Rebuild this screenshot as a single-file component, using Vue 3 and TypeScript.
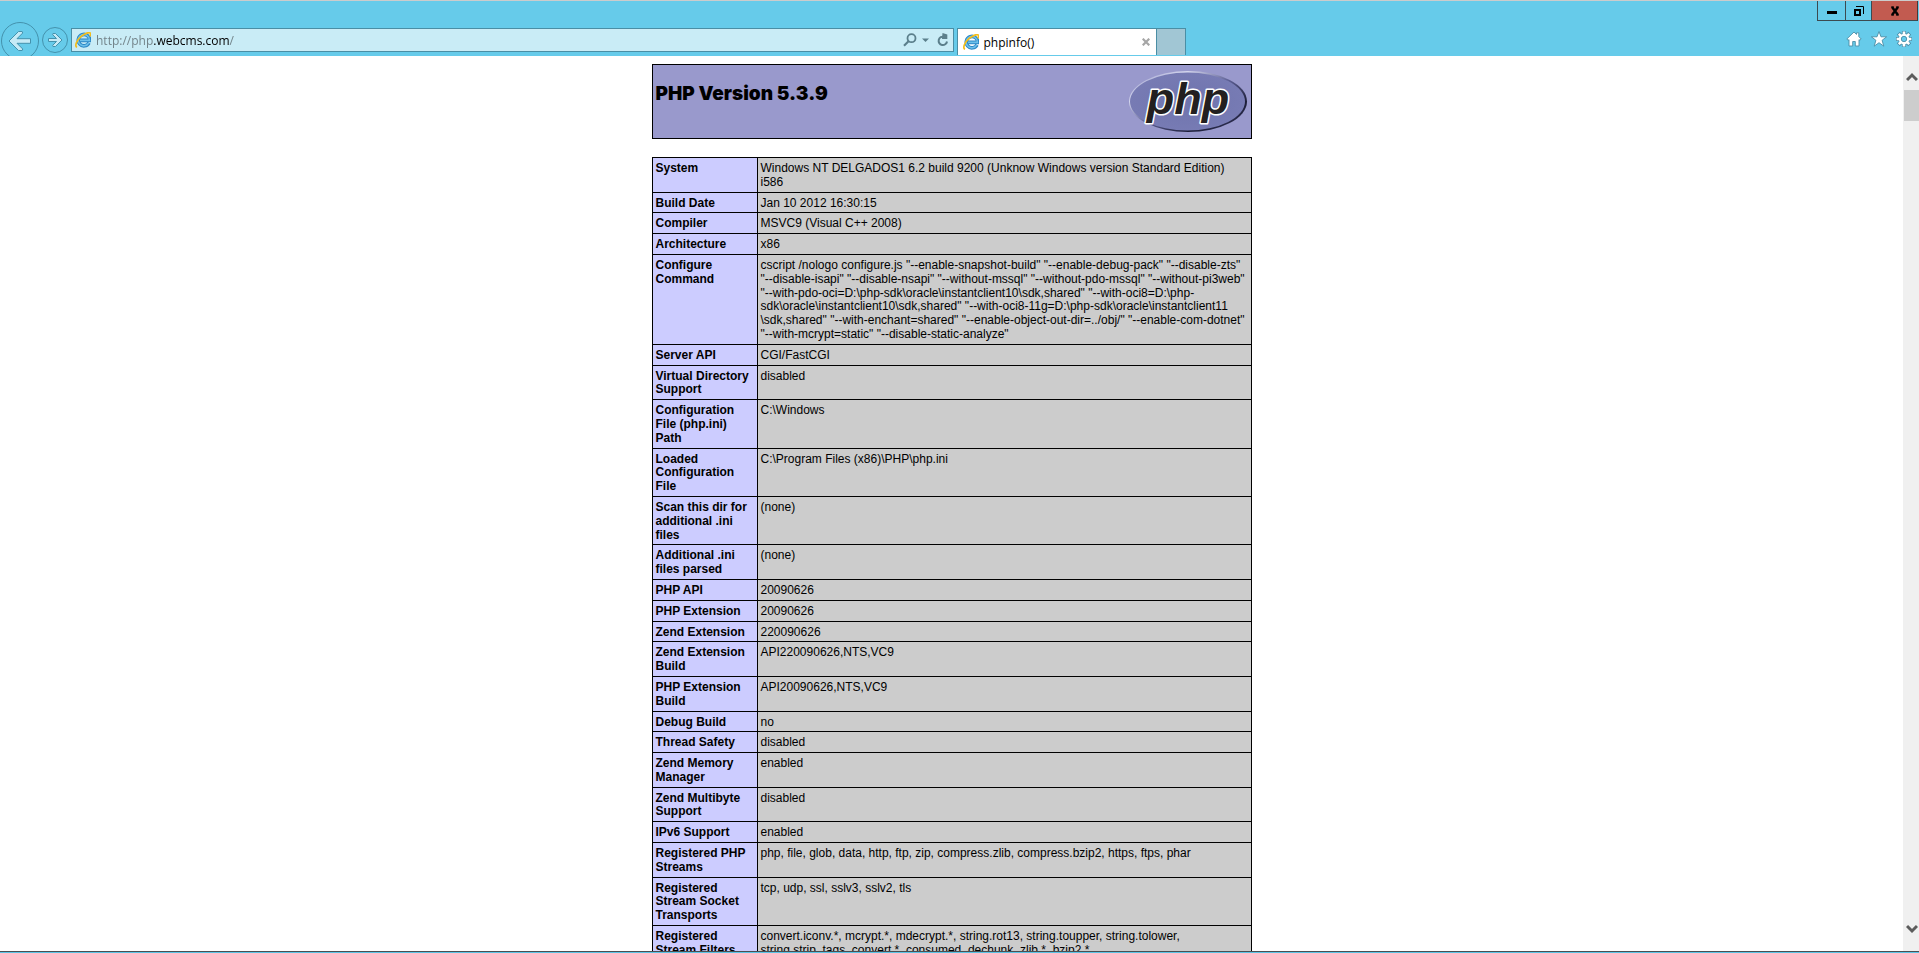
<script setup lang="ts">
import { ref } from 'vue'

interface InfoRow {
  name: string
  value: string
}

const address = ref<string>('http://php.webcms.com/')

const rows: InfoRow[] = [
  { name: 'System', value: 'Windows NT DELGADOS1 6.2 build 9200 (Unknow Windows version Standard Edition)\ni586' },
  { name: 'Build Date', value: 'Jan 10 2012 16:30:15' },
  { name: 'Compiler', value: 'MSVC9 (Visual C++ 2008)' },
  { name: 'Architecture', value: 'x86' },
  {
    name: 'Configure\nCommand',
    value: [
      'cscript /nologo configure.js "--enable-snapshot-build" "--enable-debug-pack" "--disable-zts"',
      '"--disable-isapi" "--disable-nsapi" "--without-mssql" "--without-pdo-mssql" "--without-pi3web"',
      '"--with-pdo-oci=D:\\php-sdk\\oracle\\instantclient10\\sdk,shared" "--with-oci8=D:\\php-',
      'sdk\\oracle\\instantclient10\\sdk,shared" "--with-oci8-11g=D:\\php-sdk\\oracle\\instantclient11',
      '\\sdk,shared" "--with-enchant=shared" "--enable-object-out-dir=../obj/" "--enable-com-dotnet"',
      '"--with-mcrypt=static" "--disable-static-analyze"',
    ].join('\n'),
  },
  { name: 'Server API', value: 'CGI/FastCGI' },
  { name: 'Virtual Directory\nSupport', value: 'disabled' },
  { name: 'Configuration\nFile (php.ini)\nPath', value: 'C:\\Windows' },
  { name: 'Loaded\nConfiguration\nFile', value: 'C:\\Program Files (x86)\\PHP\\php.ini' },
  { name: 'Scan this dir for\nadditional .ini\nfiles', value: '(none)' },
  { name: 'Additional .ini\nfiles parsed', value: '(none)' },
  { name: 'PHP API', value: '20090626' },
  { name: 'PHP Extension', value: '20090626' },
  { name: 'Zend Extension', value: '220090626' },
  { name: 'Zend Extension\nBuild', value: 'API220090626,NTS,VC9' },
  { name: 'PHP Extension\nBuild', value: 'API20090626,NTS,VC9' },
  { name: 'Debug Build', value: 'no' },
  { name: 'Thread Safety', value: 'disabled' },
  { name: 'Zend Memory\nManager', value: 'enabled' },
  { name: 'Zend Multibyte\nSupport', value: 'disabled' },
  { name: 'IPv6 Support', value: 'enabled' },
  { name: 'Registered PHP\nStreams', value: 'php, file, glob, data, http, ftp, zip, compress.zlib, compress.bzip2, https, ftps, phar' },
  { name: 'Registered\nStream Socket\nTransports', value: 'tcp, udp, ssl, sslv3, sslv2, tls' },
  {
    name: 'Registered\nStream Filters',
    value: 'convert.iconv.*, mcrypt.*, mdecrypt.*, string.rot13, string.toupper, string.tolower,\nstring.strip_tags, convert.*, consumed, dechunk, zlib.*, bzip2.*',
  },
]
</script>

<template>
  <div class="window">
    <svg class="defs" aria-hidden="true">
      <symbol id="ie" viewBox="0 0 16 16">
        <path d="M14 10.900a5.700 5.700 0 1 1 .7-2.500H5" fill="none" stroke="#2b86c5" stroke-width="3.600" />
        <path d="M13.800 10.900a5.700 5.700 0 1 1 .7-2.500H5" fill="none" stroke="#6cc0ea" stroke-width="1.600" />
        <path d="M2 15.200C-.6 14 1.600 8.300 6.200 4.400 10 1.200 14.500-.2 15.300 1.200c.5.800.2 2-.5 3.200" fill="none" stroke="#f3bd1b" stroke-width="1.700" />
      </symbol>
    </svg>

    <header class="chrome">
      <div class="caption">
        <button type="button" class="cap min" aria-label="Minimize">
          <svg width="10" height="10" viewBox="0 0 10 10"><path d="M0 5h10v3H0z" /></svg>
        </button>
        <button type="button" class="cap restore" aria-label="Restore">
          <svg width="10" height="10" viewBox="0 0 10 10">
            <path d="M1 4h5v5H1z" fill="none" stroke="#000" stroke-width="2" />
            <path d="M2 .5h7.500V8" fill="none" stroke="#000" />
          </svg>
        </button>
        <button type="button" class="cap close" aria-label="Close">
          <svg width="10" height="10" viewBox="0 0 10 10">
            <path d="M2 1l6 8M8 1L2 9" fill="none" stroke="#000" stroke-width="2.400" />
            <path d="M1 1h3M6 1h3M1 9h3M6 9h3" stroke="#000" stroke-width="1.200" />
          </svg>
        </button>
      </div>

      <div class="bar">
        <div class="nav">
          <button type="button" class="back" aria-label="Back">
            <svg width="40" height="40" viewBox="0 0 40 40">
              <circle cx="20" cy="20" r="18.500" fill="none" stroke="#4492ad" />
              <path d="M9 20L18.500 10.500h3.700l.5 1.500-5.700 5.700h13.500v4.600H17l5.700 5.700-.5 1.500h-3.700z" fill="#c5eaf6" stroke="#4492ad" stroke-linejoin="round" />
            </svg>
          </button>
          <button type="button" class="forward" aria-label="Forward">
            <svg width="28" height="28" viewBox="0 0 28 28">
              <circle cx="14" cy="14" r="12.500" fill="none" stroke="#4492ad" />
              <path d="M21 14l-6.500 6.500H12l-.3-1.200 3.800-3.800H7.500v-3h8l-3.800-3.800.3-1.200h2.500z" fill="#c5eaf6" stroke="#4492ad" stroke-linejoin="round" />
            </svg>
          </button>
          <form class="address" @submit.prevent>
            <svg width="16" height="16" aria-hidden="true"><use href="#ie" /></svg>
            <input v-model="address" type="text" aria-label="Address" spellcheck="false" />
            <button type="submit" aria-label="Search">
              <svg width="14" height="14" viewBox="0 0 14 14" fill="none" stroke="#5b7f8b">
                <circle cx="8.500" cy="5.200" r="4" stroke-width="1.800" />
                <path d="M5.500 8.200L1 12.700" stroke-width="2.200" />
              </svg>
            </button>
            <button type="button" aria-label="Show address history">
              <svg width="7" height="14" viewBox="0 0 7 14"><path d="M0 5.500h7L3.500 9z" fill="#5b7f8b" /></svg>
            </button>
            <button type="button" class="refresh" aria-label="Refresh">
              <svg width="12" height="14" viewBox="0 0 12 14">
                <path d="M7 3.800A4.200 4.200 0 1 0 10 8.500" fill="none" stroke="#5b7f8b" stroke-width="2" />
                <path d="M5.500 0L10.300 1.500V6H5z" fill="#5b7f8b" />
              </svg>
            </button>
          </form>
        </div>

        <div class="tabs">
          <div class="tab">
            <svg width="16" height="16" aria-hidden="true"><use href="#ie" /></svg>
            <span class="title">phpinfo()</span>
            <button type="button" aria-label="Close tab">
              <svg width="8" height="8" viewBox="0 0 8 8"><path d="M.7.7l6.600 6.600M7.300.7L.7 7.300" stroke="#a6a6a6" stroke-width="2.200" /></svg>
            </button>
          </div>
          <button type="button" class="newtab" aria-label="New tab"></button>
        </div>

        <div class="tools">
          <button type="button" aria-label="Home">
            <svg width="16" height="16" viewBox="0 0 16 16">
              <path d="M8 1L.8 8l1.400 1.300.8-.7V15h3.700v-4.500h2.600V15H13V8.600l.8.7L15.200 8l-2.400-2.400V1.800h-2.300v1.600z" fill="#fff" stroke="#4b8ea8" stroke-width=".9" />
            </svg>
          </button>
          <button type="button" aria-label="Favorites">
            <svg width="16" height="16" viewBox="0 0 16 16">
              <path d="M8 .5l2 5.300h5.600l-4.500 3.500 1.700 5.900L8 11.700l-4.800 3.500 1.700-5.900L.4 5.800H6z" fill="#fff" stroke="#4b8ea8" stroke-width=".9" />
            </svg>
          </button>
          <button type="button" aria-label="Tools">
            <svg width="16" height="16" viewBox="0 0 16 16">
              <g stroke="#4b8ea8" stroke-width="4.200"><path d="M8 0v16M0 8h16M2.300 2.300l11.400 11.400M13.700 2.300L2.300 13.700" /></g>
              <circle cx="8" cy="8" r="5.800" fill="#4b8ea8" />
              <g stroke="#fff" stroke-width="2.600"><path d="M8 .6v14.800M.6 8h14.800M2.800 2.800l10.400 10.400M13.200 2.800L2.800 13.200" /></g>
              <circle cx="8" cy="8" r="5.200" fill="#fff" />
              <circle cx="8" cy="8" r="2.700" fill="#66cbea" stroke="#4b8ea8" stroke-width=".9" />
            </svg>
          </button>
        </div>
      </div>
    </header>

    <div class="viewport">
      <main class="page">
        <div class="banner">
          <h1>PHP Version 5.3.9</h1>
          <a href="http://www.php.net/" aria-label="PHP home page">
            <svg width="120" height="67" viewBox="0 0 120 67">
              <defs>
                <linearGradient id="rim" x1="0" y1="0" x2="1" y2="1">
                  <stop offset="0" stop-color="#8d8fc4" />
                  <stop offset=".25" stop-color="#d5d7ee" />
                  <stop offset=".5" stop-color="#5c5f94" />
                  <stop offset=".75" stop-color="#1d1e38" />
                  <stop offset="1" stop-color="#3b3d68" />
                </linearGradient>
                <radialGradient id="face">
                  <stop offset="0" stop-color="#6f74ad" />
                  <stop offset="1" stop-color="#777bb4" />
                </radialGradient>
              </defs>
              <ellipse cx="60" cy="33.500" rx="59" ry="30.500" fill="url(#rim)" />
              <ellipse cx="59.500" cy="33.500" rx="57.500" ry="29" fill="url(#face)" />
              <text x="60" y="46" text-anchor="middle" class="mark">php</text>
            </svg>
          </a>
        </div>

        <table class="info">
          <tbody>
            <tr v-for="row in rows" :key="row.name">
              <th scope="row">{{ row.name }}</th>
              <td>{{ row.value }}</td>
            </tr>
          </tbody>
        </table>
      </main>

      <div class="scrollbar">
        <button type="button" aria-label="Scroll up">
          <svg width="12" height="10" viewBox="0 0 12 10"><path d="M1 8l5-5 5 5" fill="none" stroke="#5c5c5c" stroke-width="3" /></svg>
        </button>
        <div class="thumb"></div>
        <button type="button" class="down" aria-label="Scroll down">
          <svg width="12" height="10" viewBox="0 0 12 10"><path d="M1 2l5 5 5-5" fill="none" stroke="#5c5c5c" stroke-width="3" /></svg>
        </button>
      </div>
    </div>
    <div class="edge"></div>
  </div>
</template>

<style>
body {
  margin: 0;
  overflow: hidden;
}
</style>

<style scoped>
* {
  box-sizing: border-box;
}
.window {
  display: flex;
  flex-direction: column;
  height: 100vh;
  background: #fff;
  color: #000;
  font-family: 'Liberation Sans', Arial, sans-serif;
}
.defs {
  display: none;
}
button {
  display: flex;
  align-items: center;
  justify-content: center;
  margin: 0;
  padding: 0;
  border: 0;
  background: none;
}
svg {
  display: block;
  flex: none;
}
.chrome {
  flex: none;
  border-top: 1px solid #ccc;
  background: #66cbea;
  font-family: 'Open Sans', 'Noto Sans', sans-serif;
  font-size: 12px;
}
.caption {
  display: flex;
  justify-content: flex-end;
  height: 20px;
  padding-right: 1px;
}
.cap {
  width: 26px;
  border: 1px solid #3c4a50;
  border-top: 0;
  border-right: 0;
}
.cap.min {
  width: 28px;
}
.cap.close {
  width: 47px;
  border-right: 1px solid #4c3533;
  background: #c25b50;
}
.bar {
  display: flex;
  height: 35px;
  overflow: hidden;
}
.nav {
  display: flex;
  width: calc(50% - 6px);
}
.back {
  flex: none;
  width: 40px;
  height: 40px;
}
.forward {
  flex: none;
  width: 28px;
  height: 28px;
  margin: 5px 2px 0 1px;
}
.address {
  display: flex;
  flex: 1;
  align-items: center;
  gap: 5px;
  height: 24px;
  margin-top: 7px;
  padding: 0 4px 0 3px;
  border: 1px solid #4a8ea5;
  background: #c9ecf6;
}
.address input {
  flex: 1;
  min-width: 0;
  height: 22px;
  padding: 0;
  border: 0;
  outline: 0;
  background: linear-gradient(to right, #6f7f85 58px, #000 58px, #000 133px, #6f7f85 133px);
  background-clip: text;
  -webkit-background-clip: text;
  color: transparent;
  caret-color: #000;
  font-family: inherit;
  font-size: 12px;
}
.address .refresh {
  margin-left: 3px;
}
.tabs {
  display: flex;
  margin: 7px 0 1px 3px;
}
.tab {
  display: flex;
  align-items: center;
  gap: 5px;
  width: 200px;
  padding: 0 6px 0 5px;
  border: 1px solid #4a8ea5;
  border-bottom: 0;
  background: #fff;
}
.title {
  flex: 1;
}
.newtab {
  width: 29px;
  border: 1px solid #4a8ea5;
  border-left: 0;
  border-bottom: 0;
  background: #a1c6d4;
}
.tools {
  display: flex;
  gap: 9px;
  margin-left: auto;
  padding: 10px 7px 0 0;
  height: 26px;
}
.viewport {
  display: flex;
  flex: 1;
  min-height: 0;
}
.page {
  flex: 1;
  overflow: hidden;
  padding-top: 8px;
}
.banner {
  display: flex;
  align-items: flex-start;
  justify-content: space-between;
  width: 600px;
  margin: 0 auto 18px;
  padding: 3px;
  border: 1px solid #000;
  background: #9999cc;
}
h1 {
  margin: 13px 0 0;
  font-family: Inter, sans-serif;
  font-size: 19px;
  font-weight: 900;
  line-height: 26px;
}
.mark {
  fill: #231f20;
  stroke: #fff;
  stroke-width: 3px;
  stroke-linejoin: round;
  paint-order: stroke;
  font-family: 'Liberation Sans', Arial, sans-serif;
  font-size: 45px;
  font-style: italic;
  font-weight: 700;
}
.info {
  width: 600px;
  margin: 0 auto;
  border-collapse: collapse;
  font-size: 12px;
  line-height: 1.15;
}
th,
td {
  padding: 4px 3px 2px;
  border: 1px solid #000;
  text-align: left;
  vertical-align: top;
  white-space: pre-line;
}
th {
  width: 105px;
  background: #ccccff;
}
td {
  background: #cccccc;
}
.scrollbar {
  display: flex;
  flex: none;
  flex-direction: column;
  width: 16px;
  padding-left: 1px;
  background: #f0f0f0;
}
.scrollbar button {
  height: 34px;
  padding-top: 8px;
}
.thumb {
  height: 31px;
  background: #cdcdcd;
}
.scrollbar .down {
  margin-top: auto;
  padding: 0 0 10px;
}
.edge {
  flex: none;
  height: 2px;
  border-top: 1px solid #4a4f52;
  background: #5cc3e4;
}
</style>
